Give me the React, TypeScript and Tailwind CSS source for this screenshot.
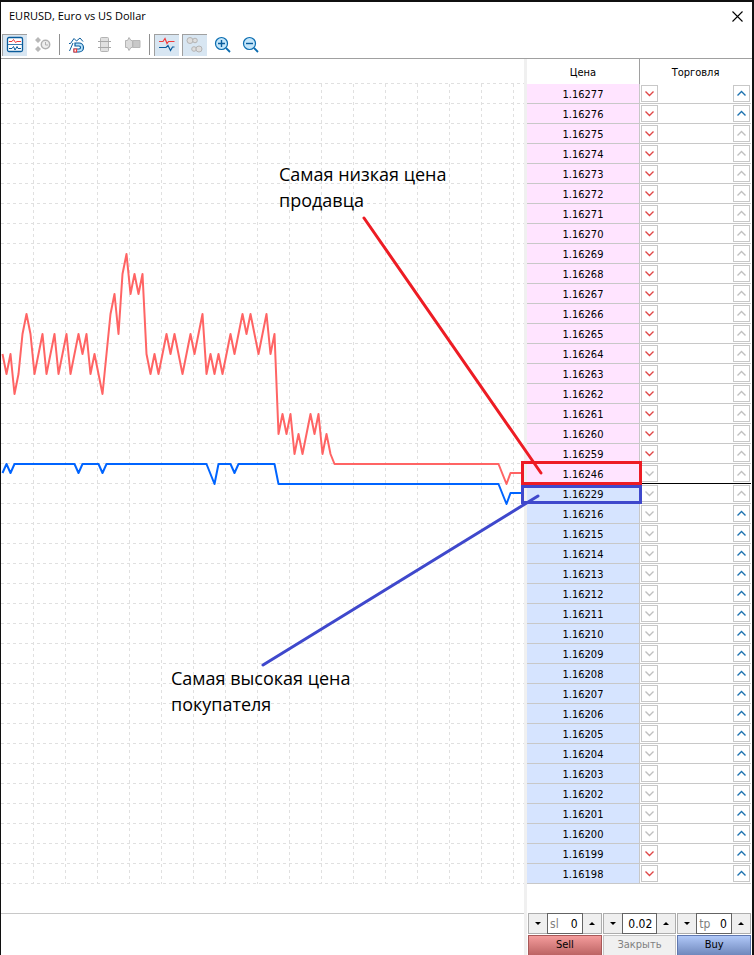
import { clsx } from 'clsx'
import type { ReactNode } from 'react'

type Side = 'ask' | 'bid'

interface Row {
  price: string
  side: Side
  sellActive: boolean
  buyActive: boolean
}

const ROW = 20
const COLUMN = 32
const STEP = 4

function price(n: number) {
  return `1.16${n}`
}

const ROWS: Row[] = [
  ...Array.from({ length: 19 }, (_, i): Row => ({ price: price(277 - i), side: 'ask', sellActive: true, buyActive: i < 2 })),
  { price: price(246), side: 'ask', sellActive: false, buyActive: false },
  { price: price(229), side: 'bid', sellActive: false, buyActive: false },
  ...Array.from({ length: 19 }, (_, i): Row => ({ price: price(216 - i), side: 'bid', sellActive: i > 16, buyActive: true })),
]

// ask ticks, counted in price rows down from the session high
const ASK_TICKS = [
  5, 6, 5, 7, 6, 4, 3, 4, 6, 5, 4, 6, 5, 4, 6, 5, 4, 6, 5, 4, 5, 4, 6, 5, 6, 7, 5, 3, 2, 4, 1, 0, 2, 1, 2, 1,
  5, 6, 5, 6, 5, 4, 5, 4, 5, 6, 5, 4, 5, 4, 3, 6, 5, 6, 5, 6, 5, 4, 5, 4, 3, 4, 3, 4, 5, 4, 3, 5, 4,
  9, 8, 9, 8, 10, 9, 10, 9, 8, 9, 8, 10, 9, 10,
]

const ASK_LINE = [
  ...ASK_TICKS.map((t, i) => `${1.5 + i * STEP},${195 + t * ROW}`),
  '333.5,405 497.5,405 505.5,425 509.5,414 524,414',
].join(' ')

const BID_LINE =
  '1.5,414 5.5,405 9.5,414 13.5,405 73.5,405 77.5,414 81.5,405 97.5,405 101.5,414 105.5,405 205.5,405 213.5,425 217.5,405 ' +
  '229.5,405 233.5,414 237.5,405 273.5,405 277.5,425 497.5,425 505.5,445 509.5,434 524,434'

function Chart() {
  return (
    <svg className="absolute inset-0 h-full w-full" fill="none">
      <g stroke="#e0e0e0" strokeDasharray="3 3" shapeRendering="crispEdges">
        {Array.from({ length: 41 }, (_, i) => (
          <line key={i} x1="0" x2="100%" y1={24.5 + i * ROW} y2={24.5 + i * ROW} />
        ))}
        {Array.from({ length: 16 }, (_, i) => (
          <line key={i} x1={32.5 + i * COLUMN} x2={32.5 + i * COLUMN} y1="25" y2="825" />
        ))}
      </g>
      <polyline points={ASK_LINE} stroke="#ff6464" strokeWidth="2" strokeLinejoin="round" />
      <polyline points={BID_LINE} stroke="#0064ff" strokeWidth="2" strokeLinejoin="round" />
    </svg>
  )
}

function Tool({ label, pressed, disabled, children }: { label: string; pressed?: boolean; disabled?: boolean; children: ReactNode }) {
  return (
    <button
      type="button"
      aria-label={label}
      aria-pressed={pressed}
      disabled={disabled}
      className={clsx('flex h-[22px] w-[25px] items-center justify-center border-t border-l', pressed ? 'border-[#a0a0a0] bg-[#d8e6f2]' : 'border-transparent')}
    >
      <svg width="18" height="18" viewBox="0 0 18 18" fill="none">{children}</svg>
    </button>
  )
}

function Separator() {
  return <div className="mx-px h-[21px] w-px bg-[#909090]" />
}

function Toolbar() {
  return (
    <div role="toolbar" className="flex h-7 items-center gap-[3px] border-b border-[#a0a0a0] pl-px">
      <Tool label="Chart" pressed>
        <rect x="1.5" y="1.5" width="15" height="14" rx="1.5" fill="#fff" stroke="#0a5c9c" strokeWidth="1.3" />
        <path d="M2 8.5h14" stroke="#0a5c9c" strokeWidth=".8" />
        <path d="M3 5.5h3l1.5-2 2 3 1.5-1h4" stroke="#f03c3c" />
        <path d="M3 12.5h3l1.5-2 1.5 3.500 2-3.500 1 2h3" stroke="#0a5c9c" />
      </Tool>
      <Tool label="Time and sales" disabled>
        <path d="M4 1l3 3-3 3-3-3zM4 10l3 3-3 3-3-3z" fill="#b8b8b8" />
        <circle cx="11.5" cy="8.5" r="4.2" fill="#eee" stroke="#b0b0b0" strokeWidth="1.5" />
        <path d="M11.5 6v3H14" stroke="#b0b0b0" />
      </Tool>
      <Separator />
      <Tool label="Snap to price">
        <path d="M1 7.500h1.500L6 2.5 8.500 5 12 2l3 3.500M1.500 15L5 7" stroke="#0a5c9c" />
        <path d="M7 7h4a4.500 4.500 0 010 9H6v-3h5a1.500 1.500 0 000-3H7z" fill="#b9e2fa" stroke="#0a5c9c" strokeWidth="1.2" />
        <path d="M6 13h2.500v3H6z" fill="#fff" stroke="#f03c3c" strokeWidth="1.2" />
      </Tool>
      <Tool label="Volumes" disabled>
        <rect x="4.5" y="1.5" width="8" height="14" rx="1" fill="#e0e0e0" stroke="#b4b4b4" />
        <path d="M2 5.5h13M2 11.5h13" stroke="#a8a8a8" />
      </Tool>
      <Tool label="Depth histogram" disabled>
        <path d="M1.5 4.5h2L5 1.5l2 3h1.5v7H7L5 14.500l-1.500-3h-2z" fill="#dcdcdc" stroke="#b4b4b4" />
        <path d="M9 4.500h7v7H9z" fill="#c8c8c8" stroke="#b8b8b8" />
      </Tool>
      <Separator />
      <Tool label="Bid and ask lines" pressed>
        <path d="M1 5.5h4l2-3 2 5 1.500-2h6" stroke="#f03c3c" strokeWidth="1.2" />
        <path d="M1 11.500h7l2-2 2.500 5 2-3.500h2" stroke="#0a5c9c" strokeWidth="1.2" />
      </Tool>
      <Tool label="Deals" pressed>
        <g fill="#dedede" stroke="#b4b4b4">
          <circle cx="4" cy="4.5" r="3" />
          <circle cx="9" cy="4.5" r="2.3" />
          <circle cx="8" cy="13" r="2.3" />
          <circle cx="13" cy="13" r="3" />
        </g>
      </Tool>
      <Tool label="Zoom in">
        <path d="M12 12l4 4" stroke="#0a6cb0" strokeWidth="1.8" />
        <circle cx="7.5" cy="7.5" r="6" fill="#c4e6fa" stroke="#0a6cb0" strokeWidth="1.2" />
        <path d="M4 7.5h7M7.5 4v7" stroke="#0a5c9c" strokeWidth="1.4" />
      </Tool>
      <Tool label="Zoom out">
        <path d="M12 12l4 4" stroke="#0a6cb0" strokeWidth="1.8" />
        <circle cx="7.5" cy="7.5" r="6" fill="#c4e6fa" stroke="#0a6cb0" strokeWidth="1.2" />
        <path d="M4 7.5h7" stroke="#0a5c9c" strokeWidth="1.4" />
      </Tool>
    </div>
  )
}

function Arrow({ direction, active }: { direction: 'up' | 'down'; active: boolean }) {
  return (
    <button
      type="button"
      aria-label={direction === 'up' ? 'Buy' : 'Sell'}
      disabled={!active}
      className={clsx(
        'flex size-[17px] items-center justify-center border border-[#c8c8c8] bg-white',
        !active && 'text-[#c0c0c0]',
        active && (direction === 'up' ? 'text-[#1c72b0]' : 'text-[#e04848]'),
      )}
    >
      <svg width="9" height="7" viewBox="0 0 9 7" fill="none" stroke="currentColor" strokeWidth="1.4">
        <path d={direction === 'up' ? 'M.5 5.5l4-4 4 4' : 'M.5 1.5l4 4 4-4'} />
      </svg>
    </button>
  )
}

function Ladder() {
  return (
    <table className="w-full table-fixed border-separate border-spacing-0">
      <thead>
        <tr className="h-[25px]">
          <th className="w-[113px] border-r border-[#a0a0a0] p-0 pt-[3px] font-normal">Цена</th>
          <th className="p-0 pt-[3px] font-normal">Торговля</th>
        </tr>
      </thead>
      <tbody>
        {ROWS.map((row, i) => (
          <tr key={row.price} className="h-5">
            <td className={clsx('border-r border-b border-[#c8c8c8] p-0 pt-0.5 text-center leading-[17px]', row.side === 'ask' ? 'bg-[#ffe4ff]' : 'bg-[#d6e4ff]')}>
              {row.price}
            </td>
            <td className={clsx('border-b p-0', i === 19 ? 'border-black' : 'border-[#c8c8c8]')}>
              <div className="flex h-[19px] items-center justify-between px-px">
                <Arrow direction="down" active={row.sellActive} />
                <Arrow direction="up" active={row.buyActive} />
              </div>
            </td>
          </tr>
        ))}
      </tbody>
    </table>
  )
}

function Spinner({ label, hint, value }: { label: string; hint?: string; value: string }) {
  const button = 'flex w-[19px] shrink-0 items-center justify-center border border-[#adadad] bg-[#efefef]'
  return (
    <div className="flex h-[21px] min-w-0">
      <button type="button" aria-label={`${label} down`} className={clsx(button, 'border-r-0')}>
        <svg width="6" height="3" viewBox="0 0 6 3"><path d="M0 0h6L3 3z" /></svg>
      </button>
      <label className="flex min-w-0 flex-1 items-center border border-[#646464] bg-white pr-1 pl-0.5">
        {hint && <span className="text-[#808080]">{hint}</span>}
        <input aria-label={label} defaultValue={value} className="w-full min-w-0 bg-transparent text-right outline-none" />
      </label>
      <button type="button" aria-label={`${label} up`} className={clsx(button, 'border-l-0')}>
        <svg width="6" height="3" viewBox="0 0 6 3"><path d="M0 3h6L3 0z" /></svg>
      </button>
    </div>
  )
}

function TradePanel() {
  return (
    <div className="mt-[29px] grid grid-cols-3 gap-px pl-px">
      <div className="contents text-xs">
        <Spinner label="Stop loss" hint="sl" value="0" />
        <Spinner label="Volume" value="0.02" />
        <Spinner label="Take profit" hint="tp" value="0" />
      </div>
      <button type="button" className="h-5 border border-b-0 border-[#a85858] bg-linear-to-b from-[#f49c9c] to-[#bc6464]">Sell</button>
      <button type="button" disabled className="h-5 border border-b-0 border-[#c4c4c4] bg-[#f0f0f0] text-[#808080]">Закрыть</button>
      <button type="button" className="h-5 border border-b-0 border-[#6078b0] bg-linear-to-b from-[#b0c8f8] to-[#7088bc]">Buy</button>
    </div>
  )
}

function Annotations() {
  return (
    <div className="pointer-events-none absolute inset-0 text-lg leading-[26px]" style={{ fontFamily: '"Open Sans", "Noto Sans", sans-serif' }}>
      <p className="absolute top-[102px] left-[278px] w-[200px]">Самая низкая цена продавца</p>
      <p className="absolute top-[606px] left-[170px] w-[200px]">Самая высокая цена покупателя</p>
      <div className="absolute top-[402px] -right-[118px] h-6 w-[121px] border-3 border-[#ed1c24]" />
      <div className="absolute top-[426px] -right-[118px] h-[19px] w-[121px] border-3 border-[#3f48cc]" />
      <svg className="absolute inset-0 h-full w-full overflow-visible" strokeWidth="3" strokeLinecap="round">
        <line x1="363" y1="159" x2="540" y2="414" stroke="#ed1c24" />
        <line x1="262" y1="606" x2="537" y2="437" stroke="#3f48cc" />
      </svg>
    </div>
  )
}

export default function App() {
  return (
    <main
      className="min-h-screen border-t-2 border-r-2 border-l border-[#101010] bg-white text-[11px] text-black"
      style={{ fontFamily: '"DejaVu Sans Condensed", "DejaVu Sans", sans-serif' }}
    >
      <header className="flex h-[29px] items-center justify-between pr-[9px] pl-2">
        <h1 style={{ fontFamily: '"Open Sans", "Noto Sans", sans-serif' }}>EURUSD, Euro vs US Dollar</h1>
        <button type="button" aria-label="Close">
          <svg width="11" height="11" viewBox="0 0 11 11" stroke="#000" strokeWidth="1.1">
            <path d="M.5.5l10 10M10.5.5l-10 10" />
          </svg>
        </button>
      </header>
      <Toolbar />
      <div className="flex">
        <section className="relative flex-1">
          <div className="relative h-[855px] border-b border-[#c8c8c8]">
            <Chart />
          </div>
          <Annotations />
        </section>
        <div className="w-[3px] bg-[#f0f0f0]" />
        <section className="w-[225px] pr-px">
          <Ladder />
          <TradePanel />
        </section>
      </div>
    </main>
  )
}
